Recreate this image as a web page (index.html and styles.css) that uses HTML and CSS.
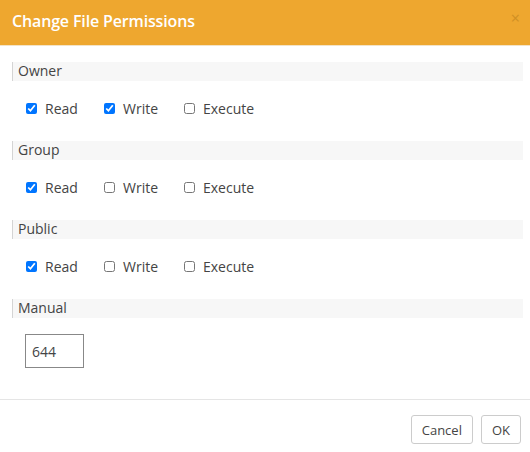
FILE: index.html
```html
<!DOCTYPE html>
<html>
<head>
<meta charset="utf-8">
<link rel="stylesheet" href="styles.css">
</head>
<body>
<div class="dialog">
  <div class="header">
    <div class="title">Change File Permissions</div>
    <div class="close">×</div>
  </div>
  <div class="body">
    <div class="section">
      <div class="bar">Owner</div>
      <div class="row">
        <label class="opt opt-read"><input type="checkbox" checked> Read</label>
        <label class="opt opt-write"><input type="checkbox" checked> Write</label>
        <label class="opt"><input type="checkbox"> Execute</label>
      </div>
    </div>
    <div class="section">
      <div class="bar">Group</div>
      <div class="row">
        <label class="opt opt-read"><input type="checkbox" checked> Read</label>
        <label class="opt opt-write"><input type="checkbox"> Write</label>
        <label class="opt"><input type="checkbox"> Execute</label>
      </div>
    </div>
    <div class="section">
      <div class="bar">Public</div>
      <div class="row">
        <label class="opt opt-read"><input type="checkbox" checked> Read</label>
        <label class="opt opt-write"><input type="checkbox"> Write</label>
        <label class="opt"><input type="checkbox"> Execute</label>
      </div>
    </div>
    <div class="section">
      <div class="bar">Manual</div>
      <div class="manual">
        <input class="mode" type="text" value="644">
      </div>
    </div>
  </div>
  <div class="footer">
    <button class="btn">Cancel</button>
    <button class="btn">OK</button>
  </div>
</div>
</body>
</html>
```

FILE: styles.css
```css
html, body {
  margin: 0;
  padding: 0;
  background: #fff;
}
body {
  font-family: "Open Sans", "Liberation Sans", sans-serif;
  color: #333;
}
.dialog {
  width: 530px;
  height: 452px;
  display: flex;
  flex-direction: column;
}
.header {
  height: 46px;
  background: #eea72f;
  border-bottom: 1px solid #f3e3c7;
  display: flex;
  align-items: center;
  justify-content: space-between;
  padding: 0 10px 0 12px;
  box-sizing: border-box;
}
.title {
  color: #fff;
  font-size: 16px;
  font-weight: 600;
  letter-spacing: -0.15px;
  margin-top: -3px;
}
.close {
  color: #c98a22;
  font-size: 16px;
  margin-top: -10px;
  opacity: 0.8;
}
.body {
  padding: 16px 7px 0 12px;
  flex: 1;
}
.bar {
  height: 19px;
  line-height: 18px;
  background: #f7f7f7;
  border-left: 1px solid #d4d4d4;
  padding-left: 5px;
  font-size: 14px;
  color: #444;
}
.row {
  display: flex;
  align-items: center;
  height: 20px;
  padding: 17px 0 23px 13px;
}
.opt {
  display: flex;
  align-items: center;
  font-size: 14px;
  color: #444;
}
.opt input {
  width: 11px;
  height: 11px;
  margin: 0 8px 0 1px;
}
.opt-read {
  width: 78px;
}
.opt-write {
  width: 80px;
}
.manual {
  padding: 16px 0 0 13px;
}
.mode {
  width: 59px;
  height: 34px;
  box-sizing: border-box;
  border: 1px solid #888;
  font-family: "Open Sans", "Liberation Sans", sans-serif;
  font-size: 14px;
  color: #444;
  padding: 0 6px;
  outline: none;
}
.footer {
  border-top: 1px solid #e5e5e5;
  height: 53px;
  display: flex;
  justify-content: flex-end;
  align-items: flex-start;
  gap: 8px;
  padding: 15px 9px 0 0;
  box-sizing: border-box;
}
.btn {
  height: 29px;
  padding: 0 10px;
  background: #fff;
  border: 1px solid #ccc;
  border-radius: 3px;
  font-family: "Open Sans", "Liberation Sans", sans-serif;
  font-size: 13px;
  color: #444;
}
```
